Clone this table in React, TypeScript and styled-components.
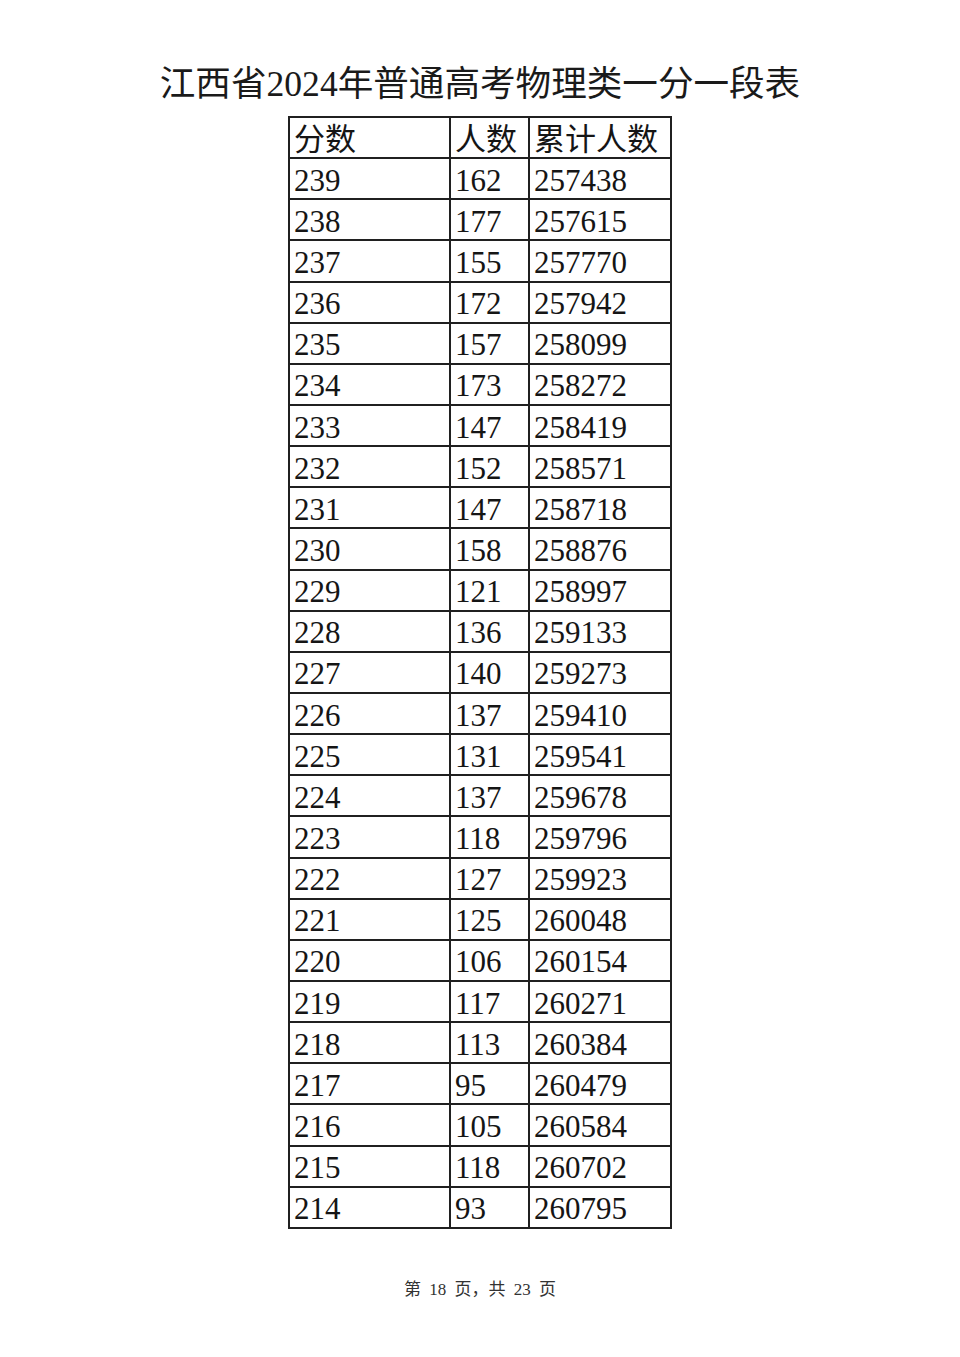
import React from 'react';
import styled, { createGlobalStyle } from 'styled-components';

const GlobalStyle = createGlobalStyle`
  html, body {
    margin: 0;
    padding: 0;
    background: #ffffff;
  }
`;

const Page = styled.div`
  width: 960px;
  height: 1357px;
  display: flex;
  flex-direction: column;
  align-items: center;
  background: #ffffff;
  color: #151515;
  font-family: 'Liberation Serif', 'Noto Sans CJK SC', serif;
`;

const Title = styled.h1`
  margin: 62px 0 0;
  font-size: 35.6px;
  line-height: 44px;
  font-weight: 400;
  color: #1a1a1a;
`;

const Table = styled.table`
  margin-top: 10px;
  border-collapse: collapse;
  border: 2px solid #202020;
  table-layout: fixed;
`;

const Cell = styled.td<{ w: number }>`
  width: ${p => p.w}px;
  height: 41.15px;
  box-sizing: border-box;
  padding: 4px 0 0 4px;
  border: 2px solid #202020;
  font-size: 31px;
  line-height: 34px;
  text-align: left;
  vertical-align: middle;
  white-space: nowrap;
  overflow: hidden;
`;

const Footer = styled.div`
  margin-top: 46px;
  font-size: 17px;
  color: #333;
  word-spacing: 4px;
`;

const rows: [number, number, number][] = [
  [239, 162, 257438],
  [238, 177, 257615],
  [237, 155, 257770],
  [236, 172, 257942],
  [235, 157, 258099],
  [234, 173, 258272],
  [233, 147, 258419],
  [232, 152, 258571],
  [231, 147, 258718],
  [230, 158, 258876],
  [229, 121, 258997],
  [228, 136, 259133],
  [227, 140, 259273],
  [226, 137, 259410],
  [225, 131, 259541],
  [224, 137, 259678],
  [223, 118, 259796],
  [222, 127, 259923],
  [221, 125, 260048],
  [220, 106, 260154],
  [219, 117, 260271],
  [218, 113, 260384],
  [217, 95, 260479],
  [216, 105, 260584],
  [215, 118, 260702],
  [214, 93, 260795],
];

const widths = [161, 79, 142];

export default function App() {
  return (
    <Page>
      <GlobalStyle />
      <Title>江西省2024年普通高考物理类一分一段表</Title>
      <Table>
        <tbody>
          <tr>
            <Cell w={widths[0]}>分数</Cell>
            <Cell w={widths[1]}>人数</Cell>
            <Cell w={widths[2]}>累计人数</Cell>
          </tr>
          {rows.map(r => (
            <tr key={r[0]}>
              <Cell w={widths[0]}>{r[0]}</Cell>
              <Cell w={widths[1]}>{r[1]}</Cell>
              <Cell w={widths[2]}>{r[2]}</Cell>
            </tr>
          ))}
        </tbody>
      </Table>
      <Footer>第 18 页，共 23 页</Footer>
    </Page>
  );
}
